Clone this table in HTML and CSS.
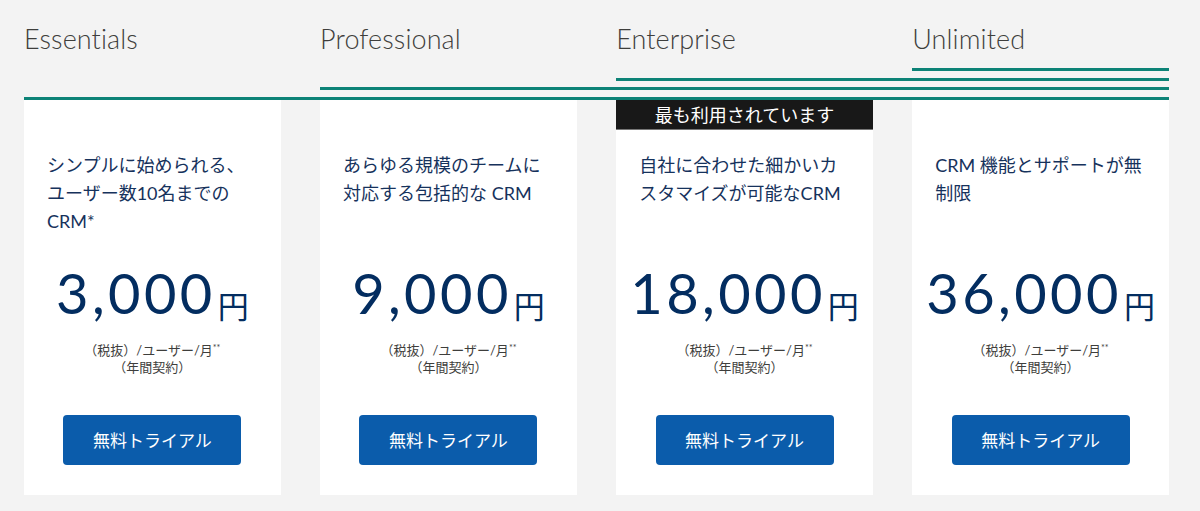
FILE: index.html
```html
<!DOCTYPE html>
<html lang="ja">
<head>
<meta charset="utf-8">
<title>Pricing</title>
<link rel="stylesheet" href="styles.css">
</head>
<body>
<div class="plans">
  <div class="titles">
    <h2 class="title">Essentials</h2>
    <h2 class="title">Professional</h2>
    <h2 class="title">Enterprise</h2>
    <h2 class="title">Unlimited</h2>
  </div>
  <div class="rules">
    <div class="rule r4"></div>
    <div class="rule r3"></div>
    <div class="rule r2"></div>
    <div class="rule r1"></div>
  </div>
  <div class="cards">
    <div class="card">
      <p class="desc">シンプルに始められる、<br>ユーザー数10名までの<br>CRM*</p>
      <div class="price"><span class="num">3,000</span><span class="yen">円</span></div>
      <p class="note">（税抜）/ユーザー/月<sup>**</sup><br>（年間契約）</p>
      <a class="btn" href="#">無料トライアル</a>
    </div>
    <div class="card">
      <p class="desc">あらゆる規模のチームに<br>対応する包括的な CRM</p>
      <div class="price"><span class="num">9,000</span><span class="yen">円</span></div>
      <p class="note">（税抜）/ユーザー/月<sup>**</sup><br>（年間契約）</p>
      <a class="btn" href="#">無料トライアル</a>
    </div>
    <div class="card">
      <div class="badge">最も利用されています</div>
      <p class="desc">自社に合わせた細かいカ<br>スタマイズが可能なCRM</p>
      <div class="price"><span class="num">18,000</span><span class="yen">円</span></div>
      <p class="note">（税抜）/ユーザー/月<sup>**</sup><br>（年間契約）</p>
      <a class="btn" href="#">無料トライアル</a>
    </div>
    <div class="card">
      <p class="desc">CRM 機能とサポートが無<br>制限</p>
      <div class="price"><span class="num">36,000</span><span class="yen">円</span></div>
      <p class="note">（税抜）/ユーザー/月<sup>**</sup><br>（年間契約）</p>
      <a class="btn" href="#">無料トライアル</a>
    </div>
  </div>
</div>
</body>
</html>
```

FILE: styles.css
```css
html, body {
  margin: 0;
  padding: 0;
  background: #f3f3f3;
}
body {
  font-family: Lato, "Noto Sans CJK JP", sans-serif;
  height: 511px;
  overflow: hidden;
}
.plans {
  width: 1145px;
  margin-left: 24px;
  padding-top: 23px;
}
.titles, .rules, .cards {
  display: grid;
  grid-template-columns: repeat(4, minmax(0, 1fr));
  column-gap: 39.33px;
}
.title {
  margin: 0;
  font-family: Lato, "Noto Sans CJK JP", sans-serif;
  font-weight: 300;
  font-size: 27px;
  line-height: 32px;
  color: #3e3e3c;
  letter-spacing: 0.1px;
}
.rules {
  margin-top: 13px;
  row-gap: 6.67px;
}
.rule {
  height: 3px;
  background: #0c8276;
}
.r4 { grid-column: 4 / 5; grid-row: 1; }
.r3 { grid-column: 3 / 5; grid-row: 2; }
.r2 { grid-column: 2 / 5; grid-row: 3; }
.r1 { grid-column: 1 / 5; grid-row: 4; }
.card {
  position: relative;
  background: #fff;
  padding: 51px 23px 30px;
  display: flex;
  flex-direction: column;
  align-items: center;
}
.badge {
  position: absolute;
  top: 0;
  left: 0;
  right: 0;
  height: 29px;
  background: #181818;
  border-bottom: 1px solid #777;
  color: #fff;
  font-family: "Noto Sans CJK JP", sans-serif;
  font-size: 18px;
  line-height: 28px;
  text-align: center;
}
.desc {
  align-self: stretch;
  margin: 0;
  height: 84px;
  font-family: Lato, "Noto Sans CJK JP", sans-serif;
  font-size: 18px;
  line-height: 28px;
  color: #16325c;
  white-space: nowrap;
}
.price {
  margin-top: 30px;
  height: 56px;
  line-height: 56px;
  color: #032d60;
  white-space: nowrap;
}
.num {
  font-family: Lato, sans-serif;
  font-weight: 400;
  font-size: 56px;
  letter-spacing: 3.4px;
}
.yen {
  font-family: "Noto Sans CJK JP", sans-serif;
  font-size: 31px;
  line-height: 1;
  margin-left: 2px;
  vertical-align: -4px;
}
.note {
  margin: 21px 0 0;
  font-family: Lato, "Noto Sans CJK JP", sans-serif;
  font-size: 13px;
  line-height: 17px;
  color: #3e3e3c;
  text-align: center;
}
.note sup {
  font-size: 9px;
  line-height: 0;
  vertical-align: 4px;
}
.btn {
  margin-top: 39px;
  width: 178px;
  height: 50px;
  border-radius: 4px;
  background: #0b5cab;
  color: #fff;
  text-decoration: none;
  font-family: "Noto Sans CJK JP", sans-serif;
  font-size: 17px;
  line-height: 50px;
  text-align: center;
}
```
